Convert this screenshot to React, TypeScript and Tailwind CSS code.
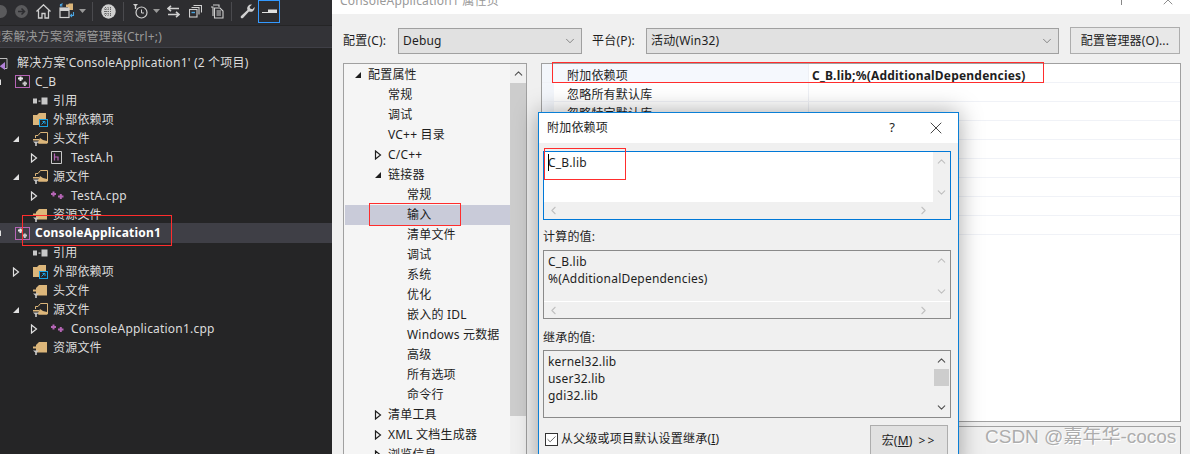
import { ChevronDown, ChevronLeft, ChevronRight, ChevronUp, X, Check } from "lucide-react";
import type { ReactNode } from "react";

const FONT = "font-['Noto_Sans','Noto_Sans_CJK_SC',sans-serif] tracking-[0.2px]";

type IconKind = "solution" | "project" | "refs" | "external" | "filter" | "folder" | "header" | "cpp";

type TreeRow = {
  indent: string;
  arrow?: "open" | "closed";
  icon: IconKind;
  label: string;
  selected?: boolean;
};

const treeRows: TreeRow[] = [
  { indent: "-ml-[24px]", icon: "solution", label: "解决方案'ConsoleApplication1' (2 个项目)" },
  { indent: "-ml-[6px]", arrow: "open", icon: "project", label: "C_B" },
  { indent: "ml-[12px]", icon: "refs", label: "引用" },
  { indent: "ml-[12px]", icon: "external", label: "外部依赖项" },
  { indent: "ml-[12px]", arrow: "open", icon: "filter", label: "头文件" },
  { indent: "ml-[30px]", arrow: "closed", icon: "header", label: "TestA.h" },
  { indent: "ml-[12px]", arrow: "open", icon: "filter", label: "源文件" },
  { indent: "ml-[30px]", arrow: "closed", icon: "cpp", label: "TestA.cpp" },
  { indent: "ml-[12px]", icon: "folder", label: "资源文件" },
  { indent: "-ml-[6px]", arrow: "open", icon: "project", label: "ConsoleApplication1", selected: true },
  { indent: "ml-[12px]", icon: "refs", label: "引用" },
  { indent: "ml-[12px]", arrow: "closed", icon: "external", label: "外部依赖项" },
  { indent: "ml-[12px]", icon: "folder", label: "头文件" },
  { indent: "ml-[12px]", arrow: "open", icon: "filter", label: "源文件" },
  { indent: "ml-[30px]", arrow: "closed", icon: "cpp", label: "ConsoleApplication1.cpp" },
  { indent: "ml-[12px]", icon: "folder", label: "资源文件" },
];

type PropRow = { indent: string; arrow?: "open" | "closed"; label: string; selected?: boolean };

const propRows: PropRow[] = [
  { indent: "ml-[9px]", arrow: "open", label: "配置属性" },
  { indent: "ml-[29px]", label: "常规" },
  { indent: "ml-[29px]", label: "调试" },
  { indent: "ml-[29px]", label: "VC++ 目录" },
  { indent: "ml-[29px]", arrow: "closed", label: "C/C++" },
  { indent: "ml-[29px]", arrow: "open", label: "链接器" },
  { indent: "ml-[48px]", label: "常规" },
  { indent: "ml-[48px]", label: "输入", selected: true },
  { indent: "ml-[48px]", label: "清单文件" },
  { indent: "ml-[48px]", label: "调试" },
  { indent: "ml-[48px]", label: "系统" },
  { indent: "ml-[48px]", label: "优化" },
  { indent: "ml-[48px]", label: "嵌入的 IDL" },
  { indent: "ml-[48px]", label: "Windows 元数据" },
  { indent: "ml-[48px]", label: "高级" },
  { indent: "ml-[48px]", label: "所有选项" },
  { indent: "ml-[48px]", label: "命令行" },
  { indent: "ml-[29px]", arrow: "closed", label: "清单工具" },
  { indent: "ml-[29px]", arrow: "closed", label: "XML 文档生成器" },
  { indent: "ml-[29px]", arrow: "closed", label: "浏览信息" },
];

function Arrow({ kind, color }: { kind?: "open" | "closed"; color: string }) {
  if (!kind) return null;
  return (
    <svg width="8" height="10" viewBox="0 0 8 10" className="block">
      {kind === "open" ? (
        <path d="M7 2 V8 H1 Z" fill={color} />
      ) : (
        <path d="M1.5 1 L6.5 5 L1.5 9 Z" fill="none" stroke={color} strokeWidth="1.2" />
      )}
    </svg>
  );
}

function TreeIcon({ kind }: { kind: IconKind }) {
  const tan = "#dcb67a";
  switch (kind) {
    case "solution":
      return (
        <svg width="16" height="16" viewBox="0 0 16 16">
          <path d="M0 3.5 H10 V13.5 H8" fill="none" stroke="#bbb" />
          <path d="M1 9 L3 11 L8 7 V15 L3 11.5 L1 13 Z" fill="#b180d7" />
        </svg>
      );
    case "project":
      return (
        <svg width="15" height="13" viewBox="0 0 15 13">
          <rect x="0.5" y="0.5" width="14" height="12" fill="none" stroke="#b565b5" />
          <path d="M3 3.5 H8 M5.5 1.5 V6" stroke="#e8e8e8" strokeWidth="2" />
          <path d="M7.5 8.5 H12 M9.8 6.5 V11" stroke="#c8c8c8" strokeWidth="2" />
        </svg>
      );
    case "refs":
      return (
        <svg width="15" height="8" viewBox="0 0 15 8">
          <rect x="0" y="1.5" width="4" height="5" fill="#c8c8c8" />
          <rect x="5.5" y="3.5" width="2" height="1.2" fill="#c8c8c8" />
          <rect x="8.5" y="0.5" width="6" height="7" fill="#c8c8c8" />
        </svg>
      );
    case "external":
      return (
        <svg width="15" height="14" viewBox="0 0 15 14">
          <path d="M0 2 H4 L6 0 H13 V6 H6 V12 H0 Z" fill={tan} />
          <rect x="6.5" y="6.5" width="8" height="7" fill="#252526" stroke="#1ba1e2" />
          <path d="M8.5 11.5 L11.5 8.5 M9.5 8.5 H12 V11" stroke="#1ba1e2" fill="none" />
        </svg>
      );
    case "filter":
      return (
        <svg width="15" height="14" viewBox="0 0 15 14">
          <path d="M2.5 6 V3.5 H5 L7.5 0.5 H14.5 V11 H6" fill="none" stroke={tan} />
          <path d="M5 10 L7 6 L10 8 L14 9 V11.5 H5 Z" fill={tan} />
          <path d="M0 7 H6 V8.5 H0 Z" fill={tan} />
          <path d="M0 9.5 H6 L3.8 11.5 V14 H2.2 V11.5 Z" fill="#c8c8c8" />
        </svg>
      );
    case "folder":
      return (
        <svg width="15" height="14" viewBox="0 0 15 14">
          <path d="M3 4 L6 1 H14 V11.5 H3 Z" fill={tan} />
          <path d="M0 5.5 H6 V7.5 H0 Z" fill={tan} />
          <path d="M0 9.5 H6 L3.8 11.5 V14 H2.2 V11.5 Z" fill="#c8c8c8" />
        </svg>
      );
    case "header":
      return (
        <svg width="11" height="13" viewBox="0 0 11 13">
          <path d="M0.5 0.5 H10.5 V12.5 H0.5 Z" fill="none" stroke="#c8c8c8" />
          <path d="M3.5 2.5 V9.5 M3.5 6 H7 V9.5" fill="none" stroke="#b565b5" strokeWidth="1.2" />
        </svg>
      );
    case "cpp":
      return (
        <svg width="13" height="9" viewBox="0 0 13 9">
          <path d="M0 3 H5 M2.5 0.5 V5.5 M7 5.5 H12.5 M9.8 3 V8" stroke="#b565b5" strokeWidth="2" />
        </svg>
      );
  }
}

function ExplorerRow({ row }: { row: TreeRow }) {
  return (
    <div className={`flex items-center whitespace-nowrap ${row.selected ? "-mt-px h-[20px] bg-[#3f3f46]" : "h-[19px]"}`}>
      <div className={`flex ${row.indent} w-[8px] shrink-0 justify-center`}>
        <Arrow kind={row.arrow} color="#e0e0e0" />
      </div>
      <div className="ml-[13px] flex w-[20px] shrink-0 items-center">
        <TreeIcon kind={row.icon} />
      </div>
      <span className={`text-[12px] ${row.selected ? "font-bold text-white" : "text-[#dcdcdc]"}`}>{row.label}</span>
    </div>
  );
}

function ToolbarSeparator({ className }: { className: string }) {
  return <div className={`h-[19px] w-px shrink-0 bg-[#4a4a4e] ${className}`} />;
}

function Toolbar() {
  const c = "#d0d0d0";
  return (
    <div className="flex h-[25px] items-center overflow-hidden bg-[#2d2d30] pb-[3px]">
      <div className="-ml-[6px] flex items-center gap-[8px]">
        <svg width="13" height="13" viewBox="0 0 13 13">
          <circle cx="6.5" cy="6.5" r="6.5" fill="#5a5a5c" />
        </svg>
        <svg width="13" height="13" viewBox="0 0 13 13">
          <circle cx="6.5" cy="6.5" r="6.5" fill="#5a5a5c" />
          <path d="M3 6.5 H9 M6.5 3.5 L9.5 6.5 L6.5 9.5" fill="none" stroke="#2d2d30" strokeWidth="1.5" />
        </svg>
      </div>
      <svg width="15" height="15" viewBox="0 0 15 15" className="ml-[8px]">
        <path d="M0.5 7.5 L7.5 0.8 L14.5 7.5 M2.5 6.5 V14 H6 V9.5 H9 V14 H12.5 V6.5" fill="none" stroke={c} strokeWidth="1.3" />
      </svg>
      <svg width="16" height="16" viewBox="0 0 16 16" className="ml-[8px]">
        <path d="M7 1.5 H9 L10 0.5 H14 V7 H9 V4 H7 Z" fill="#dcb67a" />
        <rect x="1" y="5" width="9" height="9.5" fill="none" stroke={c} strokeWidth="1.2" />
        <rect x="1" y="5" width="9" height="3" fill={c} />
        <path d="M1 3 L3.5 0.5 M1.5 1 V3 H3.5 M14.5 9 V12.5 H11.5 M13 11 L11.5 12.5 L13 14" fill="none" stroke="#4aa3df" strokeWidth="1.1" />
      </svg>
      <ChevronCaret className="ml-[4px]" />
      <ToolbarSeparator className="ml-[6px]" />
      <svg width="15" height="15" viewBox="0 0 15 15" className="ml-[8px]">
        <circle cx="7.5" cy="7.5" r="7.2" fill="#cfcfcf" />
        <path d="M3 5 H11 M3 7.5 H11 M3 10 H11 M4.5 3 V12.5 M7 3 V13 M9.5 3 V12.5" stroke="#666" strokeWidth="1" strokeDasharray="1 1" />
      </svg>
      <ToolbarSeparator className="ml-[7px]" />
      <svg width="16" height="16" viewBox="0 0 16 16" className="ml-[9px]">
        <path d="M0 1 H5 L3.2 3 V6 H1.8 V3 Z" fill={c} />
        <circle cx="8.5" cy="9.5" r="5.5" fill="none" stroke={c} strokeWidth="1.2" />
        <path d="M8.5 6.5 V10 H11" fill="none" stroke={c} />
      </svg>
      <ChevronCaret className="ml-[4px]" />
      <svg width="13" height="13" viewBox="0 0 13 13" className="ml-[7px]">
        <path d="M1 3.5 H12 M4 0.8 L1 3.5 L4 6.2 M12 9.5 H1 M9 6.8 L12 9.5 L9 12.2" fill="none" stroke={c} strokeWidth="1.6" />
      </svg>
      <svg width="13" height="13" viewBox="0 0 13 13" className="ml-[9px]">
        <rect x="0.5" y="4.5" width="7.5" height="7.5" fill="#2d2d30" stroke={c} strokeWidth="1.1" />
        <path d="M2.5 7.5 H6" stroke="#4aa3df" strokeWidth="1.4" />
        <path d="M2.5 2.5 H10 V9.5 M4.5 0.5 H12.5 V7.5" fill="none" stroke={c} strokeWidth="1.1" />
      </svg>
      <svg width="14" height="15" viewBox="0 0 14 15" className="ml-[8px]">
        <path d="M3 1 H9 V3 M1 3 H3 V12" fill="none" stroke={c} strokeWidth="1.1" />
        <path d="M4.5 4 H10 L13 7 V14 H4.5 Z M6.5 7 H11 M6.5 9 H11 M6.5 11 H11" fill="none" stroke={c} strokeWidth="1.1" />
      </svg>
      <ToolbarSeparator className="ml-[7px]" />
      <svg width="15" height="15" viewBox="0 0 15 15" className="ml-[8px]">
        <path d="M14.5 3 A4 4 0 0 1 9 7.5 L3 14 C1.5 15 0 13.5 1 12 L7.5 6 A4 4 0 0 1 12 0.5 L9.5 3 L10.5 4.8 L12.5 5.3 Z" fill={c} />
      </svg>
      <div className="ml-[3px] flex h-[23px] w-[22px] shrink-0 items-center justify-center border border-[#3399ff]">
        <svg width="15" height="5" viewBox="0 0 15 5">
          <path d="M0 3 H6 V0.5 H15 V4 H0 Z" fill="#e0e0e0" />
        </svg>
      </div>
    </div>
  );
}

function ChevronCaret({ className }: { className: string }) {
  return (
    <svg width="7" height="4" viewBox="0 0 7 4" className={className}>
      <path d="M0 0 H7 L3.5 4 Z" fill="#999" />
    </svg>
  );
}

function Explorer() {
  return (
    <aside className="flex h-full w-[332px] shrink-0 flex-col overflow-hidden bg-[#252526]">
      <Toolbar />
      <div className="mt-px flex h-[22px] items-center overflow-hidden border-b border-[#3f3f46] bg-[#333337] pt-[1px]">
        <span className="-ml-[11px] text-[12px] whitespace-nowrap text-[#999]">搜索解决方案资源管理器(Ctrl+;)</span>
      </div>
      <div className="mt-[5px]">
        {treeRows.map((row, i) => (
          <ExplorerRow key={i} row={row} />
        ))}
      </div>
    </aside>
  );
}

function Select({ value, className }: { value: string; className: string }) {
  return (
    <div className={`flex h-[26px] items-center justify-between border border-[#a0a0a0] bg-[#e1e1e1] pr-[4px] pl-[4px] text-[12px] text-[#1e1e1e] ${className}`}>
      <span>{value}</span>
      <ChevronDown size={14} strokeWidth={1} color="#444" />
    </div>
  );
}

function ScrollColumn({ active, thumb }: { active?: boolean; thumb?: boolean }) {
  const color = active ? "#505050" : "#c0c0c0";
  return (
    <div className="flex w-[17px] shrink-0 flex-col items-center justify-between bg-[#f0f0f0] py-[3px]">
      <ChevronUp size={13} strokeWidth={2} color={color} />
      {thumb && <div className="absolute top-[18px] right-[1px] h-[17px] w-[15px] bg-[#cdcdcd]" />}
      <ChevronDown size={13} strokeWidth={2} color={color} />
    </div>
  );
}

function ValueBox({ children, editable, inherited, className }: { children: ReactNode; editable?: boolean; inherited?: boolean; className: string }) {
  return (
    <div className={`relative flex flex-col border ${editable ? "border-[#0078d7]" : "border-[#8a8a8a]"} ${className}`}>
      <div className="flex min-h-0 flex-1">
        <div className={`min-w-0 flex-1 pt-[2px] pl-[4px] text-[12px] leading-[17px] text-[#1e1e1e] ${editable ? "bg-white" : "bg-[#f0f0f0]"}`}>
          {children}
        </div>
        <ScrollColumn active={inherited} thumb={inherited} />
      </div>
      {!inherited && (
        <div className={`flex h-[17px] shrink-0 items-center justify-between bg-[#f0f0f0] pr-[20px] pl-[3px] ${editable ? "" : "border-t border-white"}`}>
          <ChevronLeft size={13} strokeWidth={2} color="#c0c0c0" />
          <ChevronRight size={13} strokeWidth={2} color="#c0c0c0" />
        </div>
      )}
    </div>
  );
}

function Dialog() {
  return (
    <div className="absolute top-[112px] left-[538px] h-[360px] w-[421px] border border-[#0a7fd6] bg-[#f0f0f0] shadow-[0_0_22px_rgba(0,0,0,0.35)]">
      <div className="flex h-[30px] items-center justify-between bg-white pr-[12px] pl-[8px] text-[12px] text-[#1e1e1e]">
        <span>附加依赖项</span>
        <div className="flex items-center gap-[31px]">
          <span className="text-[13px]">?</span>
          <X size={20} strokeWidth={1} color="#222" />
        </div>
      </div>
      <div className="px-[4px] pt-[8px]">
        <ValueBox editable className="h-[69px] w-[408px]">
          <div className="relative">
            <span className="absolute top-0 left-0 h-[17px] w-px bg-black" />
            C_B.lib
          </div>
        </ValueBox>
        <div className="mt-[8px] h-[22px] text-[12px] leading-[18px] text-[#1e1e1e]">计算的值:</div>
        <ValueBox className="h-[69px] w-[408px]">
          <div>C_B.lib</div>
          <div>%(AdditionalDependencies)</div>
        </ValueBox>
        <div className="mt-[10px] h-[21px] text-[12px] leading-[18px] text-[#1e1e1e]">继承的值:</div>
        <ValueBox inherited className="h-[68px] w-[408px]">
          <div>kernel32.lib</div>
          <div>user32.lib</div>
          <div>gdi32.lib</div>
        </ValueBox>
        <div className="mt-[7px] flex items-start justify-between pr-[6px]">
          <div className="mt-[5px] flex items-center gap-[3px] pl-[2px] text-[12px] text-[#1e1e1e]">
            <div className="flex h-[13px] w-[13px] items-center justify-center border border-[#333] bg-white">
              <Check size={11} strokeWidth={1.5} color="#222" />
            </div>
            <span>
              从父级或项目默认设置继承(<span className="underline">I</span>)
            </span>
          </div>
          <div className="flex h-[32px] w-[78px] items-center justify-center gap-[6px] border border-[#adadad] bg-[#e1e1e1] text-[12px] text-[#1e1e1e]">
            <span>
              宏(<span className="underline">M</span>)
            </span>
            <span className="tracking-[2px]">&gt;&gt;</span>
          </div>
        </div>
      </div>
    </div>
  );
}

function PropertyPages() {
  return (
    <main className="flex h-full min-w-0 flex-1 flex-col">
      <div className="flex h-[14px] shrink-0 items-start justify-between overflow-hidden bg-white pr-[14px] pl-[8px]">
        <span className="-mt-[6px] text-[12px] leading-[14px] whitespace-nowrap text-[#999]">ConsoleApplication1 属性页</span>
        <div className="-mt-[8px] flex items-center gap-[38px]">
          <div className="h-[10px] w-px bg-[#888]" />
          <X size={16} strokeWidth={1} color="#555" />
        </div>
      </div>
      <div className="flex min-h-0 flex-1 flex-col bg-[#f0f0f0] pt-[13px] pr-[9px] pl-[11px]">
        <div className="flex h-[27px] shrink-0 items-center text-[12px] text-[#1e1e1e]">
          <span className="w-[55px]">配置(C):</span>
          <Select value="Debug" className="w-[184px]" />
          <span className="ml-[10px] w-[54px]">平台(P):</span>
          <Select value="活动(Win32)" className="w-[413px]" />
          <div className="ml-[11px] flex h-[27px] w-[110px] items-center justify-center border border-[#adadad] bg-[#e8e8e8]">
            配置管理器(O)...
          </div>
        </div>
        <div className="mt-[9px] flex min-h-0 flex-1 gap-[14px]">
          <div className="flex h-[400px] w-[184px] shrink-0 border border-[#a0a0a0] bg-[#f5f5f5]">
            <div className="min-w-0 flex-1 pt-[1px] pl-[1px] text-[12px] text-[#1e1e1e]">
              {propRows.map((row, i) => (
                <div key={i} className={`flex h-[20px] items-center whitespace-nowrap ${row.selected ? "bg-[#c9cbd9]" : ""}`}>
                  <div className={`flex ${row.indent} w-[8px] shrink-0 justify-center`}>
                    <Arrow kind={row.arrow} color="#1e1e1e" />
                  </div>
                  <span className="ml-[6px]">{row.label}</span>
                </div>
              ))}
            </div>
            <div className="w-[16px] shrink-0 bg-[#f0f0f0]">
              <div className="flex h-[19px] items-center justify-center">
                <ChevronUp size={13} strokeWidth={2} color="#505050" />
              </div>
              <div className="h-[333px] bg-[#cdcdcd]" />
            </div>
          </div>
          <div className="flex min-w-0 flex-1 flex-col">
            <div className="h-[359px] shrink-0 border border-[#a0a0a0] bg-white">
              <div className="flex h-[19px] border-b border-[#f0f2f7] text-[12px] text-[#1e1e1e]">
                <div className="w-[12px] shrink-0 bg-[#f3f6fb]" />
                <div className="flex w-[254px] shrink-0 items-center bg-[#f5f8fd] pt-[5px] pl-[13px]">附加依赖项</div>
                <div className="flex items-center border-l border-[#eef0f5] pt-[5px] pl-[3px] font-bold">C_B.lib;%(AdditionalDependencies)</div>
              </div>
              {["忽略所有默认库", "忽略特定默认库", "", "", "", "", "", ""].map((label, i) => (
                <div key={i} className="flex h-[19px] border-b border-[#f0f2f7] text-[12px] text-[#1e1e1e]">
                  <div className="w-[12px] shrink-0 bg-[#f3f6fb]" />
                  <div className="flex w-[254px] shrink-0 items-center pt-[5px] pl-[13px]">{label}</div>
                  <div className="border-l border-[#eef0f5]" />
                </div>
              ))}
            </div>
            <div className="mt-[4px] h-[40px] shrink-0 border border-[#a0a0a0]" />
          </div>
        </div>
      </div>
    </main>
  );
}

function RedBox({ className }: { className: string }) {
  return <div className={`pointer-events-none absolute border border-[#ff2d2d] ${className}`} />;
}

export default function App() {
  return (
    <div className={`relative flex h-[454px] w-[1190px] overflow-hidden ${FONT}`}>
      <Explorer />
      <PropertyPages />
      <Dialog />
      <RedBox className="top-[215px] left-[22px] h-[31px] w-[150px]" />
      <RedBox className="top-[62px] left-[552px] h-[21px] w-[492px]" />
      <RedBox className="top-[203px] left-[369px] h-[23px] w-[92px]" />
      <RedBox className="top-[148px] left-[544px] h-[32px] w-[82px]" />
      <div className="absolute top-[423px] left-[985px] font-['Liberation_Sans','Noto_Sans_CJK_SC',sans-serif] text-[19px] tracking-normal whitespace-nowrap text-[#adadad] [text-shadow:1px_1px_0_#fff]">
        CSDN @嘉年华-cocos
      </div>
    </div>
  );
}
